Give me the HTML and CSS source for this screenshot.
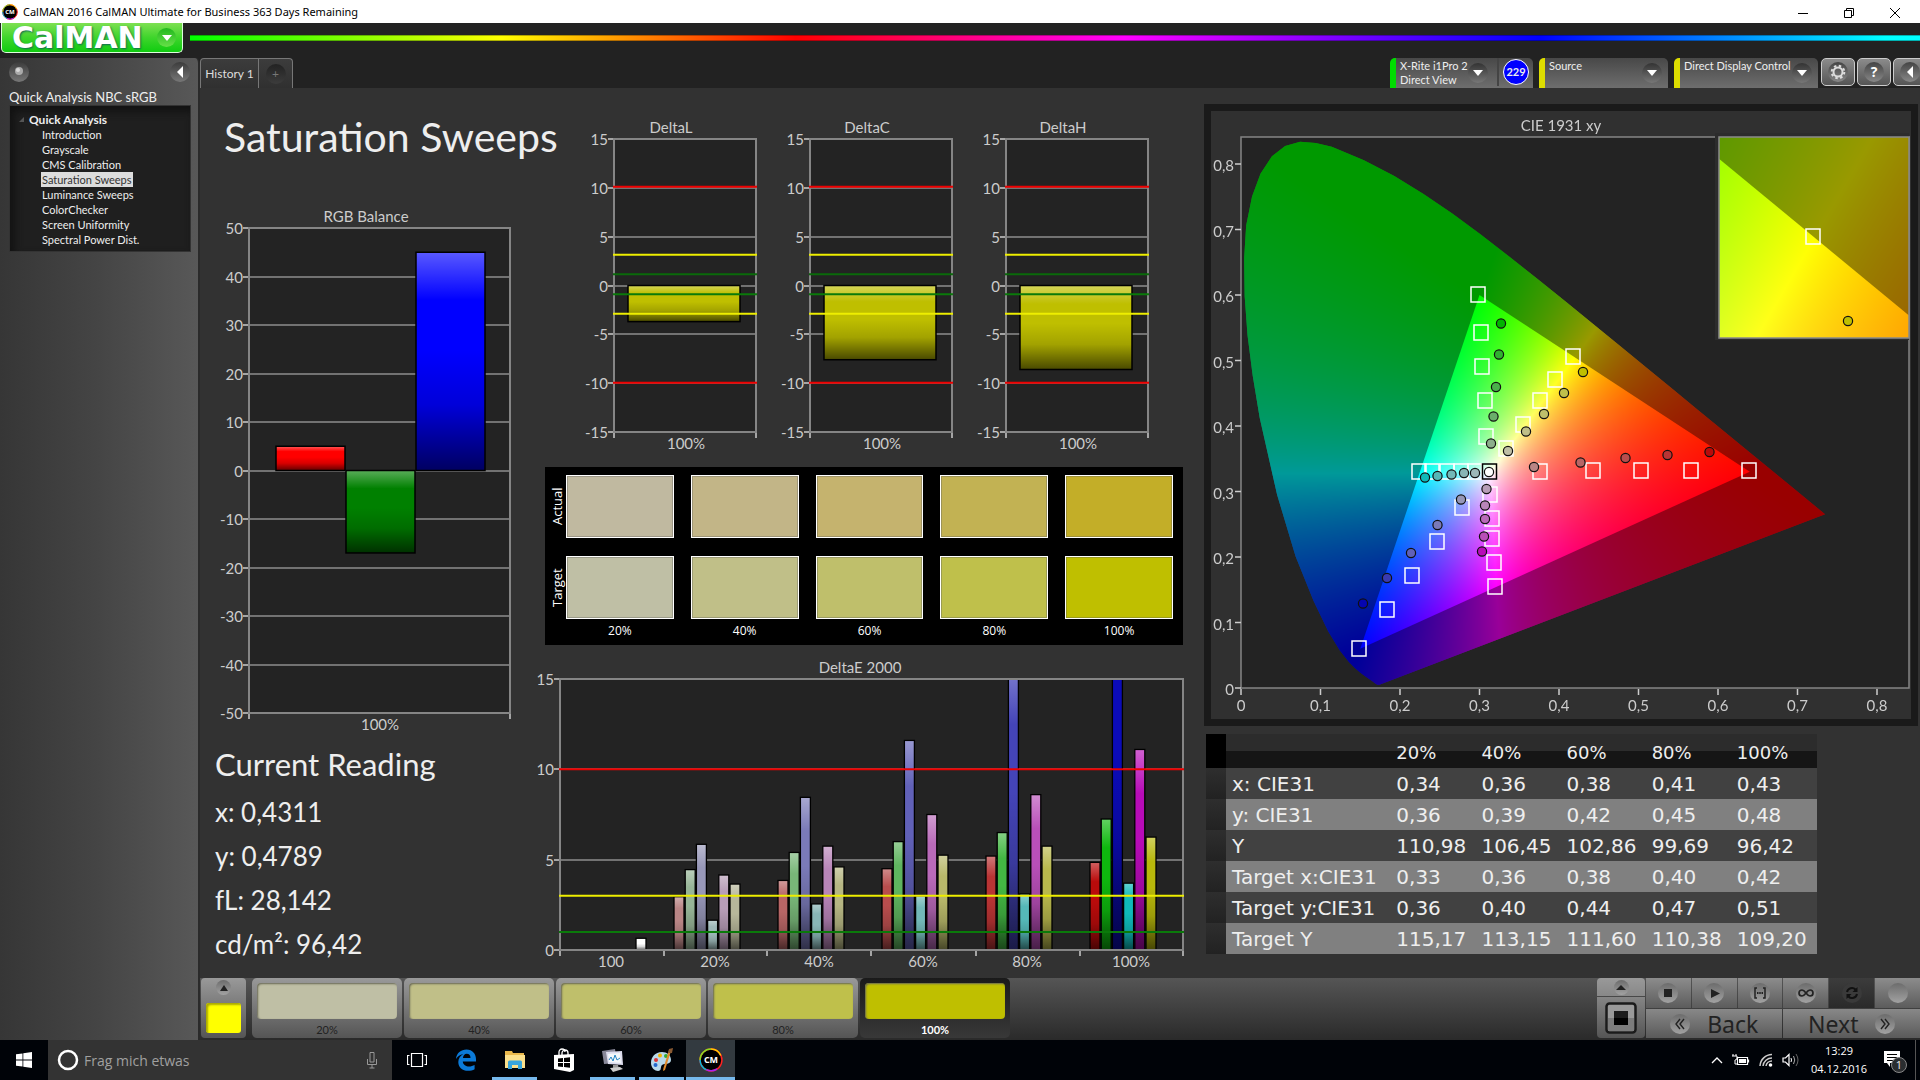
FILE: index.html
```html
<!DOCTYPE html>
<html lang="en">
<head>
<meta charset="utf-8">
<title>CalMAN 2016 CalMAN Ultimate for Business</title>
<link rel="stylesheet" href="styles.css">
</head>
<body>
<div class="titlebar">
  <svg class="app-icon" width="16" height="16" viewBox="0 0 16 16"><use href="#cm"/></svg>
  <span class="titlebar-text">CalMAN 2016 CalMAN Ultimate for Business 363 Days Remaining</span>
  <div class="window-buttons">
    <button aria-label="Minimize"><svg width="12" height="12" viewBox="0 0 12 12"><path d="M1 6.5h10" stroke="#000" fill="none"/></svg></button>
    <button aria-label="Restore"><svg width="12" height="12" viewBox="0 0 12 12"><path d="M1.500 3.500h7v7h-7zM3.500 3.500v-2h7v7h-2" stroke="#000" fill="none"/></svg></button>
    <button aria-label="Close"><svg width="12" height="12" viewBox="0 0 12 12"><path d="M1 1l10 10M11 1L1 11" stroke="#000" fill="none"/></svg></button>
  </div>
</div>

<header class="brandbar">
  <button class="logo"><span class="logo-text">CalMAN</span><span class="logo-arrow"><svg width="10" height="6" viewBox="0 0 10 6"><path d="M0 0h10L5 6z" fill="#fff"/></svg></span></button>
  <div class="spectrum"></div>
</header>

<div class="workspace">
  <aside class="sidebar">
    <div class="sidebar-top">
      <button class="round" aria-label="Options"><svg width="20" height="20" viewBox="0 0 20 20"><circle cx="10" cy="9" r="4" fill="#aaa"/><circle cx="9" cy="8" r="2" fill="#d8d8d8"/></svg></button>
      <button class="round" aria-label="Collapse"><svg width="20" height="20" viewBox="0 0 20 20"><path d="M13 4v12L7 10z" fill="#fff"/></svg></button>
    </div>
    <h2 class="workflow">Quick Analysis NBC sRGB</h2>
    <nav class="tree">
      <div class="tree-root"><svg width="5" height="5" viewBox="0 0 5 5"><path d="M5 0v5H0z" fill="#555"/></svg>Quick Analysis</div>
      <ul>
        <li><a href="#">Introduction</a></li>
        <li><a href="#">Grayscale</a></li>
        <li><a href="#">CMS Calibration</a></li>
        <li><a href="#" class="current">Saturation Sweeps</a></li>
        <li><a href="#">Luminance Sweeps</a></li>
        <li><a href="#">ColorChecker</a></li>
        <li><a href="#">Screen Uniformity</a></li>
        <li><a href="#">Spectral Power Dist.</a></li>
      </ul>
    </nav>
  </aside>

  <div class="content">
    <div class="toolbar">
      <div class="tabs">
        <button class="tab">History 1</button>
        <button class="tab add"><span>+</span></button>
      </div>
      <div class="devices">
        <button class="device meter"><span class="device-name">X-Rite i1Pro 2<br>Direct View</span><span class="drop"><svg width="10" height="6" viewBox="0 0 10 6"><path d="M0 0h10L5 6z" fill="#fff"/></svg></span><span class="count"><b>229</b></span></button>
        <button class="device source"><span class="device-name">Source</span><span class="drop"><svg width="10" height="6" viewBox="0 0 10 6"><path d="M0 0h10L5 6z" fill="#fff"/></svg></span></button>
        <button class="device display"><span class="device-name">Direct Display Control</span><span class="drop"><svg width="10" height="6" viewBox="0 0 10 6"><path d="M0 0h10L5 6z" fill="#fff"/></svg></span></button>
        <div class="tools">
          <button class="tool" aria-label="Settings"><span class="disc"><svg width="16" height="16" viewBox="0 0 16 16"><circle cx="8" cy="8" r="4.500" fill="none" stroke="#ddd" stroke-width="2"/><circle cx="8" cy="8" r="6.300" fill="none" stroke="#ddd" stroke-width="2" stroke-dasharray="2.500 2.450"/></svg></span></button>
          <button class="tool" aria-label="Help"><span class="disc">?</span></button>
          <button class="tool" aria-label="Hide"><span class="disc"><svg width="6" height="12" viewBox="0 0 6 12"><path d="M6 0v12L0 6z" fill="#fff"/></svg></span></button>
        </div>
      </div>
    </div>

    <main class="board">
      <section class="col-left">
        <h1>Saturation Sweeps</h1>
        <svg id="rgb" class="chart" viewBox="0 0 300 530" role="img" aria-label="RGB Balance"></svg>
        <div class="reading">
          <h2>Current Reading</h2>
          <p>x: 0,4311</p>
          <p>y: 0,4789</p>
          <p>fL: 28,142</p>
          <p>cd/m²: 96,42</p>
        </div>
      </section>

      <section class="col-mid">
        <div class="deltas">
          <svg id="deltaL" class="chart" viewBox="0 0 196 340" role="img" aria-label="DeltaL"></svg>
          <svg id="deltaC" class="chart" viewBox="0 0 196 340" role="img" aria-label="DeltaC"></svg>
          <svg id="deltaH" class="chart" viewBox="0 0 196 340" role="img" aria-label="DeltaH"></svg>
        </div>
        <div class="swatches">
          <span class="vlabel">Actual</span>
          <i class="a20"></i><i class="a40"></i><i class="a60"></i><i class="a80"></i><i class="a100"></i>
          <span class="vlabel">Target</span>
          <i class="t20"></i><i class="t40"></i><i class="t60"></i><i class="t80"></i><i class="t100"></i>
          <span></span><span>20%</span><span>40%</span><span>60%</span><span>80%</span><span>100%</span>
        </div>
        <svg id="deltaE" class="chart" viewBox="0 0 660 320" role="img" aria-label="DeltaE 2000"></svg>
      </section>

      <section class="col-right">
        <div class="cie-panel">
          <svg id="cie" class="chart" viewBox="0 0 700 608" role="img" aria-label="CIE 1931 xy">
            <foreignObject x="30" y="26" width="668" height="551"><canvas id="gamut" width="668" height="551"></canvas></foreignObject>
            <g id="cie-marks"></g>
            <rect x="504" y="22" width="194" height="207" fill="#2c2c2c"/>
            <foreignObject x="508" y="26" width="190" height="201"><canvas id="inset" width="190" height="201"></canvas></foreignObject>
            <g id="inset-marks"></g>
          </svg>
        </div>
        <table class="results">
          <thead><tr><th class="stub"></th><th></th><th>20%</th><th>40%</th><th>60%</th><th>80%</th><th>100%</th></tr></thead>
          <tbody>
            <tr><td class="stub"></td><th>x: CIE31</th><td>0,34</td><td>0,36</td><td>0,38</td><td>0,41</td><td>0,43</td></tr>
            <tr><td class="stub"></td><th>y: CIE31</th><td>0,36</td><td>0,39</td><td>0,42</td><td>0,45</td><td>0,48</td></tr>
            <tr><td class="stub"></td><th>Y</th><td>110,98</td><td>106,45</td><td>102,86</td><td>99,69</td><td>96,42</td></tr>
            <tr><td class="stub"></td><th>Target x:CIE31</th><td>0,33</td><td>0,36</td><td>0,38</td><td>0,40</td><td>0,42</td></tr>
            <tr><td class="stub"></td><th>Target y:CIE31</th><td>0,36</td><td>0,40</td><td>0,44</td><td>0,47</td><td>0,51</td></tr>
            <tr><td class="stub"></td><th>Target Y</th><td>115,17</td><td>113,15</td><td>111,60</td><td>110,38</td><td>109,20</td></tr>
          </tbody>
        </table>
      </section>
    </main>

    <footer class="controls">
      <button class="pattern-current" aria-label="Current color"><span class="disc small"><svg width="8" height="6" viewBox="0 0 8 6"><path d="M0 6h8L4 0z" fill="#222"/></svg></span><i></i></button>
      <div class="patterns">
        <button class="pattern"><i class="t20"></i>20%</button>
        <button class="pattern"><i class="t40"></i>40%</button>
        <button class="pattern"><i class="t60"></i>60%</button>
        <button class="pattern"><i class="t80"></i>80%</button>
        <button class="pattern active"><i class="t100"></i>100%</button>
      </div>
      <div class="window-mode">
        <button class="mode-up" aria-label="More"><span class="disc small"><svg width="10" height="5" viewBox="0 0 10 5"><path d="M0 5h10L5 0z" fill="#222"/></svg></span></button>
        <button class="mode" aria-label="Pattern window"><svg width="32" height="32" viewBox="0 0 32 32"><rect x="1.500" y="1.500" width="29" height="29" rx="3" fill="#9a9a9a" stroke="#1b1b1b" stroke-width="2.500"/><path d="M3 16h26v13H3z" fill="#7c7c7c"/><rect x="9" y="9" width="14" height="14"/><rect x="9" y="9" width="14" height="7" fill="#1c1c1c"/></svg></button>
      </div>
      <div class="transport">
        <button aria-label="Stop"><span class="disc"><svg width="20" height="20" viewBox="0 0 20 20"><path d="M6 6h8v8H6z" fill="#222"/></svg></span></button>
        <button aria-label="Play"><span class="disc"><svg width="20" height="20" viewBox="0 0 20 20"><path d="M7 6v9l9-4.500z" fill="#222"/></svg></span></button>
        <button aria-label="Read series"><span class="disc"><svg width="20" height="20" viewBox="0 0 20 20"><path d="M7 5H5v10h2M13 5h2v10h-2" fill="none" stroke="#222" stroke-width="1.500"/><path d="M7 10h6" stroke="#222" stroke-width="2" stroke-dasharray="1.500 .750"/></svg></span></button>
        <button aria-label="Continuous"><span class="disc"><svg width="20" height="20" viewBox="0 0 20 20"><path d="M10 10c-1.500-2-2.500-3-4-3a3 3 0 0 0 0 6c1.500 0 2.500-1 4-3s2.500-3 4-3a3 3 0 0 1 0 6c-1.500 0-2.500-1-4-3z" fill="none" stroke="#222" stroke-width="1.700"/></svg></span></button>
        <button class="pressed" aria-label="Repeat"><span class="disc"><svg width="20" height="20" viewBox="0 0 20 20"><path d="M5 9a5 5 0 0 1 8.500-2.500M15 11a5 5 0 0 1-8.500 2.500" fill="none" stroke="#111" stroke-width="2"/><path d="M15.500 4v5h-5zM4.500 16v-5h5z" fill="#111"/></svg></span></button>
        <button aria-label="Record"><span class="disc"></span></button>
        <button class="wide"><span class="disc"><svg width="20" height="20" viewBox="0 0 20 20"><path d="M10 5l-4 5 4 5M14 5l-4 5 4 5" fill="none" stroke="#222" stroke-width="1.400"/></svg></span>Back</button>
        <button class="wide next">Next<span class="disc"><svg width="20" height="20" viewBox="0 0 20 20"><path d="M6 5l4 5-4 5M10 5l4 5-4 5" fill="none" stroke="#222" stroke-width="1.400"/></svg></span></button>
      </div>
    </footer>
  </div>
</div>

<div class="taskbar">
  <button class="task start" aria-label="Start"><svg width="16" height="16" viewBox="0 0 16 16"><path d="M0 2.300L6.500 1.400V7.600H0zM7.300 1.300L16 0v7.600H7.300zM0 8.400h6.500v6.200L0 13.700zM7.300 8.400H16V16l-8.700-1.300z" fill="#fff"/></svg></button>
  <label class="search">
    <svg width="22" height="22" viewBox="0 0 22 22"><circle cx="11" cy="11" r="9" fill="none" stroke="#fff" stroke-width="2.500"/></svg>
    <input type="text" placeholder="Frag mich etwas" aria-label="Search">
    <svg width="12" height="18" viewBox="0 0 12 18"><path d="M4 1.500h4V11H4zM1.500 8v5.500h9V8M6 13.500V17M3.500 17h5" fill="none" stroke="#999"/></svg>
  </label>
  <button class="task" aria-label="Task view"><svg width="20" height="16" viewBox="0 0 20 16"><path d="M4.500 1.500h11v13h-11zM2.500 3.500h-2v9h2M17.500 3.500h2v9h-2" fill="none" stroke="#fff" stroke-width="1.200"/></svg></button>
  <button class="task" aria-label="Edge"><svg width="22" height="22" viewBox="0 0 22 22"><path d="M1 10C1.500 4 6 .500 11.500.500 17.500.500 21 5 21 10v2.500H7.800c.2 3.500 3.300 5 6.200 5 2 0 4-.6 5.600-1.500v4.200C17.800 21.300 15.500 21.800 13 21.800 7.500 21.800 3.300 18.500 3.300 13c0-3.500 2-6.500 5-8C5 5.500 2.500 7.500 1 10zM8 9h7.500c0-3-1.500-4.300-3.700-4.300C9.500 4.700 8.200 6.500 8 9z" fill="#0b7ad8"/></svg></button>
  <button class="task open" aria-label="Explorer"><svg width="22" height="20" viewBox="0 0 22 20"><path d="M1 1h7l1 2h11v15H1z" fill="#e9b84c"/><path d="M1 5h20v13H1z" fill="#fbe08c"/><path d="M4 19v-7q0-1.500 1.500-1.500h11q1.500 0 1.500 1.500v7h-4v-4H8v4z" fill="#38a5dc"/></svg></button>
  <button class="task" aria-label="Store"><svg width="22" height="24" viewBox="0 0 22 24"><path d="M6 8V4a3 3 0 0 1 6 0M9 8V5a3 3 0 0 1 6 0v2" fill="none" stroke="#fff" stroke-width="1.300"/><path d="M1 7l20-1v16l-4 2L1 21z" fill="#fff"/><path d="M5 10.500l5-.5v4H5zM11 9.900l6-.6V14h-6zM5 15h5v4l-5-.5zM11 15h6v4.700l-6-.6z" fill="#000"/></svg></button>
  <button class="task open" aria-label="Display calibration"><svg width="24" height="24" viewBox="0 0 24 24"><path d="M1 3l13-2 2 14-13 1z" fill="#889"/><path d="M5 4l16-1 1 14-15-1z" fill="#dde"/><path d="M7 6l12-1 1 10-12-1z" fill="#f4f8fb"/><path d="M8 12l2-3 2 4 2-6 2 5 3-2" fill="none" stroke="#2384c4"/><path d="M12 17h5l1 4h-6z" fill="#999"/><path d="M9 20l10-1 3 2-10 3z" fill="#ccc"/></svg></button>
  <button class="task open" aria-label="Paint"><svg width="24" height="24" viewBox="0 0 24 24"><path d="M12 4C5 4 1 9 1 15c0 5 4 8 7 8 4 0 2-4 4-6s9 0 9-5-4-8-9-8z" fill="#b7d8ea"/><circle cx="6" cy="12" r="2" fill="#d33"/><circle cx="10" cy="7.500" r="2" fill="#f5b400"/><circle cx="16" cy="8" r="2" fill="#3a3"/><circle cx="5.500" cy="17" r="2" fill="#26c"/><path d="M21 3l-6 19-2 1 .5-3L19 2z" fill="#e08a2a"/><path d="M18 5l1-4 4-1-1 5z" fill="#8a5a33"/></svg></button>
  <button class="task open focused" aria-label="CalMAN"><svg width="24" height="24" viewBox="0 0 16 16"><use href="#cm"/></svg></button>
  <div class="tray">
    <svg width="12" height="8" viewBox="0 0 12 8"><path d="M1 7l5-5 5 5" fill="none" stroke="#fff" stroke-width="1.300"/></svg>
    <svg width="18" height="12" viewBox="0 0 18 12"><path d="M5.500 3.500h10v7h-10zM16.500 5.500v3" fill="none" stroke="#fff" stroke-width="1.200"/><path d="M7 5h7v4H7z" fill="#fff"/><path d="M1 0v2M4 0v2M0 2h5v2a2 2 0 0 1-2 2v4h2" fill="none" stroke="#fff"/></svg>
    <svg width="14" height="14" viewBox="0 0 14 14"><path d="M1 13A12 12 0 0 1 13 1.500M4 13A9 9 0 0 1 13 5M7 13a6 6 0 0 1 6-5" fill="none" stroke="#ccc" stroke-width="1.500"/><circle cx="11.500" cy="12" r="1.800" fill="#fff"/></svg>
    <svg width="18" height="14" viewBox="0 0 18 14"><path d="M1 5h2.500L7 1.500v11L3.500 9H1z" fill="none" stroke="#fff" stroke-width="1.200"/><path d="M9 5q1 2 0 4" fill="none" stroke="#fff"/><path d="M11.500 3q2.500 4 0 8" fill="none" stroke="#aaa"/><path d="M14 1q4 6 0 12" fill="none" stroke="#666"/></svg>
    <div class="clock">13:29<br>04.12.2016</div>
    <div class="notice"><svg width="17" height="17" viewBox="0 0 17 17"><path d="M0 0h16v12H6v4l-3-4H0z" fill="#fff"/><path d="M3 3.500h10M3 6.500h10M3 9.500h6" stroke="#000"/></svg><span class="badge">1</span></div>
    <span class="peek"></span>
  </div>
</div>

<svg class="defs" width="0" height="0">
  <defs>
    <linearGradient id="shade" x1="0" y1="0" x2="0" y2="1">
      <stop offset="0" stop-color="#fff" stop-opacity=".35"/><stop offset=".22" stop-color="#fff" stop-opacity="0"/>
      <stop offset=".45" stop-color="#000" stop-opacity="0"/><stop offset=".7" stop-color="#000" stop-opacity=".15"/>
      <stop offset="1" stop-color="#000" stop-opacity=".62"/>
    </linearGradient>
    <symbol id="cm" viewBox="0 0 16 16">
      <circle cx="8" cy="8" r="7.300" fill="#000" stroke="#f22" stroke-width="1"/>
      <path d="M.7 8A7.300 7.300 0 0 1 8 .7" fill="none" stroke="#8d2" stroke-width="1"/>
      <path d="M8 .7A7.300 7.300 0 0 1 14.500 5" fill="none" stroke="#fc0" stroke-width="1"/>
      <path d="M.7 8A7.300 7.300 0 0 0 5 14.500" fill="none" stroke="#0bd" stroke-width="1"/>
      <path d="M5 14.500A7.300 7.300 0 0 0 12 14" fill="none" stroke="#a2e" stroke-width="1"/>
      <text x="8" y="10.300" text-anchor="middle" class="cm-text">CM</text>
    </symbol>
  </defs>
</svg>
<script src="charts.js"></script>
</body>
</html>
```
FILE: styles.css
```css
* { box-sizing: border-box; }
body {
  margin: 0;
  min-height: 100vh;
  display: flex;
  flex-direction: column;
  overflow: hidden;
  background: #222;
  color: #eee;
  font: 12px/15px Lato, "Noto Sans", sans-serif;
}
button { border: 0; padding: 0; background: none; color: inherit; font: inherit; }
h1, h2, p, ul { margin: 0; padding: 0; font-weight: 400; }
a { color: inherit; text-decoration: none; }
.defs { position: absolute; }
.cm-text { font: 700 6px "Open Sans", sans-serif; fill: #fff; }

.titlebar { display: flex; align-items: center; height: 23px; padding-left: 2px; background: #fff; color: #000; line-height: 22px; }
.app-icon { margin-right: 5px; }
.titlebar-text { font-family: "Noto Sans", sans-serif; font-size: 11px; }
.window-buttons { display: flex; margin-left: auto; padding-right: 2px; }
.window-buttons button { width: 46px; height: 20px; }
.window-buttons svg { vertical-align: middle; }

.brandbar { display: flex; height: 35px; }
.logo {
  display: flex; align-items: center; justify-content: space-between;
  width: 182px; height: 30px; margin: 0 7px 0 1px; padding: 0 6px 0 10px;
  border: 1px solid #dfd; border-top: 0; border-radius: 0 0 5px 5px;
  background: linear-gradient(#7ee052, #3fd52c 50%, #10cc10);
}
.logo-text { font: 700 30px/29px "DejaVu Sans", sans-serif; color: #fff; text-shadow: 1px 1px 2px #165; }
.logo-arrow { display: grid; place-items: center; width: 19px; height: 19px; border-radius: 50%; background: linear-gradient(#22b81e, #66e048); }
.spectrum { flex: 1; height: 6px; margin-top: 12px; border-block: 1px solid rgba(0,0,0,.3); background: linear-gradient(90deg, #0f0, #ff0 18%, #f00 35%, #f0f 54%, #00f 78%, #0ff 98%); }

.workspace { flex: 1; display: flex; }
.sidebar { width: 200px; flex: none; padding: 4px 8px 0 9px; border-right: 2px solid #2a2a2a; border-radius: 0 5px 0 0; background: linear-gradient(90deg, #363636, #454545 50%, #585858); }
.sidebar-top { display: flex; justify-content: space-between; height: 29px; }
.round { width: 20px; height: 20px; border-radius: 50%; background: linear-gradient(#3c3c3c, #777); }
.workflow { font-size: 13px; line-height: 13px; }
.tree { width: 182px; height: 147px; margin-top: 1px; padding: 6px 0 0 9px; border: 1px solid #333; background: #1f1f1f; box-shadow: inset 4px 5px 8px #111; }
.tree-root { display: flex; align-items: center; gap: 5px; font-weight: 700; }
.tree ul { display: grid; grid-auto-rows: 1fr; height: 116px; list-style: none; padding-left: 23px; }
.tree li { line-height: 15px; font-size: 11px; }
.current { display: inline-block; padding: 0 1px; margin-left: -1px; background: #ddd; color: #333; }

.content { flex: 1; min-width: 0; display: flex; flex-direction: column; }
.toolbar { display: flex; justify-content: space-between; height: 30px; }
.tabs { display: flex; }
.tab { width: 59px; border: 1px solid #777; border-bottom: 0; border-radius: 4px 0 0 0; background: linear-gradient(#3c3c3c, #303030); color: #ddd; font-size: 12px; }
.tab.add { width: 34px; border-left: 0; border-radius: 0 4px 0 0; color: #777; }
.tab.add span { display: inline-block; width: 20px; line-height: 20px; border-radius: 50%; background: linear-gradient(#222, #3c3c3c); }
.devices { display: flex; gap: 6px; overflow: hidden; }
.device { display: flex; padding-left: 4px; border-left: 6px solid #cc0; border-radius: 5px 5px 0 0; background: linear-gradient(#484848, #6e6e6e); text-align: left; line-height: 14px; }
.device-name { flex: 1; width: 0; padding-top: 1px; white-space: nowrap; font-size: 11px; }
.drop { flex: none; display: grid; place-items: center; width: 20px; height: 20px; margin: 5px 6px; border-radius: 50%; background: linear-gradient(#333, #777); }
.meter { width: 143px; border-color: #0d0; }
.meter .drop { margin: 5px 9px 0 0; }
.source { width: 129px; border-color: #dd0; }
.display { width: 144px; border-color: #dd0; }
.count { flex: none; display: grid; place-items: center; width: 36px; height: 28px; border-left: 2px solid #444; }
.count b { width: 26px; height: 26px; border: 1px solid #fff; border-radius: 50%; background: #00f; text-align: center; line-height: 24px; font-size: 11px; }
.tools { display: flex; gap: 2px; width: 99px; margin-left: -3px; }
.tool { flex: none; width: 34px; height: 28px; border: 1px solid #ccc; border-radius: 5px; background: linear-gradient(#8b8b8b, #555); display: grid; place-items: center; }
.disc { display: grid; place-items: center; width: 20px; height: 20px; border-radius: 50%; background: linear-gradient(#6c6c6c, #a2a2a2); }
.tool .disc { background: linear-gradient(#444, #888); color: #fff; font: 700 14px/20px "Open Sans", sans-serif; }
.disc.small { width: 15px; height: 15px; }

.board { flex: 1; display: grid; grid-template-columns: 330fr 660fr 730fr; background: #323232; }
.board > section { min-width: 0; }
.chart { display: block; width: 100%; height: auto; }
.chart text { font: 15px Lato, sans-serif; fill: #ccc; dominant-baseline: central; }
.col-left { padding: 24px 15px 0; }
h1 { padding-left: 9px; font-size: 41px; line-height: 50px; white-space: nowrap; }
#rgb { margin-top: 43px; }
.reading { font-size: 26px; }
.reading h2 { margin-bottom: -3px; font-size: 31px; line-height: 58px; }
.reading p { line-height: 44px; }
.deltas { display: grid; grid-template-columns: repeat(3, 1fr); padding: 27px 22px 0 50px; }
.swatches {
  display: grid; grid-template-columns: 0 repeat(5, 1fr); grid-template-rows: 63px 63px 16px;
  gap: 18px 17px; margin: 12px 7px 10px 15px; padding: 8px 10px 0 4px; height: 178px;
  background: #000; color: #fff; text-align: center; font: 12px/16px "Open Sans", sans-serif;
}
.swatches i { border: 1px solid #fff; box-shadow: inset 0 0 0 1px rgba(90,90,90,.35); }
.swatches > span:nth-last-child(-n+6) { margin-top: -14px; }
.vlabel { width: 16px; writing-mode: vertical-rl; transform: rotate(180deg); line-height: 16px; font-size: 13px; }
.a20 { background: #c0b9a0; } .a40 { background: #c2b587; } .a60 { background: #c5b36e; } .a80 { background: #c2b253; } .a100 { background: #c3ae28; }
.t20 { background: #bfbfa5; } .t40 { background: #c0bf88; } .t60 { background: #bfbf6b; } .t80 { background: #bfc04b; } .t100 { background: #bfbf00; }
.col-right { padding: 16px 2px 0 14px; }
.cie-panel { border: 7px solid #1a1a1a; background: #303030; }
.results { margin: 8px 0 0 2px; border-collapse: collapse; table-layout: fixed; width: 611px; font: 20px/27px "DejaVu Sans", sans-serif; }
.results th, .results td { height: 31px; padding: 2px 0 0 5px; width: 85px; text-align: left; font-weight: 400; white-space: nowrap; }
.results th:nth-child(2) { width: 165px; padding-left: 6px; }
.results th.stub, .results td.stub { width: 20px; padding: 0; background: linear-gradient(#2e2e2e, #222); }
.results thead th { height: 34px; font-size: 18px; }
.results thead tr { background: linear-gradient(#2c2c2c 50%, #151515 50%); }
.results thead .stub { background: #000; }
.results tbody tr { background: #414141; }
.results tbody tr:nth-child(even) { background: #808080; }

.controls { display: flex; height: 62px; padding: 0 0 2px 1px; background: linear-gradient(#555, #2a2a2a); color: #222; font-size: 11px; }
.pattern-current { width: 45px; display: flex; flex-direction: column; align-items: center; justify-content: space-between; padding: 2px 5px 5px; border-radius: 4px; background: linear-gradient(#999, #555); }
.pattern-current i { width: 35px; height: 30px; border-radius: 3px; background: #ff0; box-shadow: inset 2px 2px 2px #aa0; }
.patterns { display: flex; gap: 2px; margin-left: 6px; }
.pattern { width: 150px; padding: 5px 5px 1px; border-radius: 5px; background: linear-gradient(#999, #555); line-height: 14px; display: flex; flex-direction: column; gap: 4px; text-align: center; }
.pattern i { display: block; width: 100%; height: 36px; border-radius: 4px; box-shadow: inset 1px 1px 2px #665; }
.pattern { align-items: center; }
.pattern.active { background: linear-gradient(#1a1a1a, #383838); color: #fff; font-weight: 700; }
.window-mode { display: grid; grid-template-rows: 18px 1fr; gap: 1px; width: 48px; margin-left: auto; }
.window-mode button { display: grid; place-items: center; background: linear-gradient(#999, #888); border-radius: 4px 4px 0 0; }
.window-mode .mode { background: linear-gradient(#858585, #555); border-radius: 0 0 4px 4px; }
.transport { display: grid; grid-template-columns: repeat(6, 1fr); grid-template-rows: 30px 29px; gap: 1px; width: 274px; margin-left: 1px; }
.transport button { display: flex; align-items: center; justify-content: center; background: linear-gradient(#8c8c8c, #5c5c5c); }
.transport .pressed { background: linear-gradient(#3c3c3c, #2a2a2a); }
.pressed .disc { background: #3a3a3a; }
.transport .wide { grid-column: span 3; gap: 17px; font: 23px/28px "Noto Sans", sans-serif; background: linear-gradient(#888, #5a5a5a); }

.taskbar { display: flex; height: 40px; background: #000308; font-family: "Open Sans", sans-serif; }
.task { display: grid; place-items: center; width: 49px; border-bottom: 3px solid transparent; padding-top: 3px; background-clip: padding-box; }
.start { width: 48px; }
.task.open { border-image: linear-gradient(90deg, transparent 5px, #76b9ed 5px 44px, transparent 44px) 3; }
.task.focused { background: #333a40; border-image: none; border-bottom-color: #76b9ed; }
.search { display: flex; align-items: center; width: 344px; padding: 0 14px 0 9px; background: #333; }
.search input { flex: 1; border: 0; padding: 0 0 0 5px; background: none; font: 14px "Open Sans", sans-serif; }
.search input::placeholder { color: #a0a0a0; opacity: 1; }
.tray { display: flex; align-items: center; gap: 9px; margin-left: auto; height: 40px; }
.clock { text-align: center; line-height: 18px; font-size: 11px; width: 60px; color: #fff; }
.notice { position: relative; margin-left: 6px; width: 24px; height: 24px; padding-top: 3px; }
.badge { position: absolute; left: 7px; top: 9px; width: 16px; height: 16px; border: 1px solid #888; border-radius: 50%; background: #2a2d30; text-align: center; line-height: 14px; font-size: 11px; }
.peek { width: 5px; height: 40px; margin-left: -2px; border-left: 1px solid #555; }
```
FILE: charts.js
```js
const NS = 'http://www.w3.org/2000/svg';

function add(parent, name, attrs, text) {
  const el = document.createElementNS(NS, name);
  for (const key in attrs) el.setAttribute(key, attrs[key]);
  if (text !== undefined) el.textContent = text;
  parent.appendChild(el);
  return el;
}

function line(svg, x1, y1, x2, y2, color, width) {
  add(svg, 'path', { d: `M${x1} ${y1}L${x2} ${y2}`, stroke: color, 'stroke-width': width });
}

/* Bar chart: o = {left, right, top, bottom, min, max, step, bars, limits, labels, ticks} */
function barChart(id, o) {
  const svg = document.getElementById(id);
  const toY = v => o.bottom - (v - o.min) / (o.max - o.min) * (o.bottom - o.top);
  add(svg, 'text', { x: o.titleX, y: o.top - 12, 'text-anchor': 'middle' }, o.title);
  add(svg, 'rect', { x: o.left, y: o.top, width: o.right - o.left, height: o.bottom - o.top, fill: '#232323' });
  for (let v = o.min; v <= o.max; v += o.step) {
    const y = Math.round(toY(v));
    line(svg, o.left, y, o.right, y, '#727272', 2);
    line(svg, o.left - 6, y, o.left, y, '#ccc', 1.5);
    add(svg, 'text', { x: o.left - 6, y, 'text-anchor': 'end' }, v);
  }
  const clip = id + '-clip';
  add(add(svg, 'clipPath', { id: clip }), 'rect', { x: o.left, y: o.top, width: o.right - o.left, height: o.bottom - o.top + 1 });
  const group = add(svg, 'g', { 'clip-path': `url(#${clip})` });
  for (const [x, w, v, color] of o.bars) {
    const base = toY(Math.max(0, o.min));
    const y = Math.min(base, toY(v));
    const h = Math.abs(base - toY(v));
    add(group, 'rect', { x, y, width: w, height: h, fill: color });
    add(group, 'rect', { x, y, width: w, height: h, fill: 'url(#shade)', stroke: '#000', 'stroke-width': o.outline });
  }
  add(svg, 'rect', { x: o.left, y: o.top, width: o.right - o.left, height: o.bottom - o.top, fill: 'none', stroke: '#858585', 'stroke-width': 2 });
  for (const [v, color] of o.limits || []) line(svg, o.left - 1, toY(v), o.right + 1, toY(v), color, 2);
  for (const x of o.ticks) line(svg, x, o.bottom + 1, x, o.bottom + 6, '#ccc', 1.5);
  for (const [x, text] of o.labels) add(svg, 'text', { x, y: o.bottom + 11, 'text-anchor': 'middle' }, text);
}

barChart('rgb', {
  title: 'RGB Balance', titleX: 151, left: 34, right: 295, top: 23, bottom: 508,
  min: -50, max: 50, step: 10, outline: 1.5,
  bars: [[61, 69, 5, '#f00'], [131, 69, -17, '#008000'], [201, 69, 45, '#00f']],
  ticks: [34, 295], labels: [[165, '100%']]
});

const limits = [[10.1, '#e00'], [-9.95, '#e00'], [3.15, '#ee0'], [-2.9, '#ee0'], [1.15, '#0a6a0a'], [-0.9, '#0a7a0a']];
for (const [id, v] of [['deltaL', -3.7], ['deltaC', -7.6], ['deltaH', -8.6]]) {
  barChart(id, {
    title: id[0].toUpperCase() + id.slice(1), titleX: 91, left: 34, right: 176, top: 24, bottom: 317,
    min: -15, max: 15, step: 5, outline: 1.5, limits,
    bars: [[48, 112, v, '#bfbf00']], ticks: [34, 176], labels: [[106, '100%']]
  });
}

const series = [
  [[2.95, '#b98585'], [4.45, '#97b597'], [5.85, '#9797b8'], [1.65, '#9db8b8'], [4.15, '#b79db7'], [3.65, '#b7b79b']],
  [[3.85, '#b86666'], [5.4, '#78b678'], [8.45, '#7a7ab8'], [2.55, '#88b5b5'], [5.75, '#b985b9'], [4.6, '#b6b683']],
  [[4.5, '#b84d4d'], [6, '#5fb55f'], [11.6, '#6161b8'], [3, '#72b8b8'], [7.5, '#b96ab9'], [5.25, '#b8b86a']],
  [[5.2, '#b93434'], [6.5, '#43b743'], [16, '#4444b8'], [3.1, '#55b8b8'], [8.6, '#b94fb9'], [5.75, '#b8b84d']],
  [[4.85, '#b90b0b'], [7.25, '#0eb80e'], [20, '#0b0bb9'], [3.7, '#0fb9b9'], [11.1, '#b80bb8'], [6.25, '#b8b80b']]
];
const bars = [[106, 10, 0.65, '#fff']];
series.forEach((set, g) => set.forEach(([v, c], i) => bars.push([30 + 104 * (g + 1) + 10 + i * 11.2, 10, v, c])));
barChart('deltaE', {
  title: 'DeltaE 2000', titleX: 330, left: 30, right: 653, top: 24, bottom: 295,
  min: 0, max: 15, step: 5, outline: 1.3, bars,
  limits: [[10, '#e00'], [3, '#ee0'], [1, '#0a7a0a']],
  ticks: [30, 134, 237, 341, 446, 550, 653],
  labels: ['100', '20%', '40%', '60%', '80%', '100%'].map((t, i) => [81 + i * 104, t])
});

/* CIE 1931 chromaticity */
const locus = [.1741,.005,.1714,.0051,.1689,.0069,.1644,.0109,.1566,.0177,.151,.0227,.144,.0297,.1355,.0399,.1241,.0578,.1096,.0868,.0913,.1327,.0687,.2007,.0454,.295,.0235,.4127,.0147,.477,.0082,.5384,.0046,.598,.0039,.6548,.0065,.706,.0139,.7502,.0245,.785,.0389,.812,.0555,.8275,.0743,.8338,.094,.832,.1142,.8262,.1547,.8059,.1929,.7816,.2296,.7543,.2658,.7243,.3016,.6923,.3373,.6589,.3731,.6245,.4087,.5896,.4441,.5547,.4788,.5202,.5125,.4866,.5448,.4544,.5752,.4242,.6029,.3965,.627,.3725,.6658,.334,.6915,.3083,.719,.2809,.7347,.2653];
const gamut = [.64, .33, .3, .6, .15, .06];

function paintGamut(id, x0, y0, sx, sy) {
  const canvas = document.getElementById(id);
  const { width: w, height: h } = canvas;
  const ctx = canvas.getContext('2d');
  const off = document.createElement('canvas');
  off.width = w; off.height = h;
  const octx = off.getContext('2d');
  const image = octx.createImageData(w, h);
  for (let j = 0; j < h; j++) for (let i = 0; i < w; i++) {
    const x = x0 + i / sx, y = y0 + (h - j) / sy, z = 1 - x - y;
    const rgb = [3.2406 * x - 1.5372 * y - .4986 * z, -.9689 * x + 1.8758 * y + .0415 * z, .0557 * x - .204 * y + 1.057 * z].map(c => Math.max(0, c));
    const max = Math.max(...rgb);
    const k = (j * w + i) * 4;
    for (let c = 0; c < 3; c++) image.data[k + c] = rgb[c] / max * 255;
    image.data[k + 3] = 255;
  }
  octx.putImageData(image, 0, 0);
  const clipTo = pts => {
    ctx.beginPath();
    for (let n = 0; n < pts.length; n += 2) ctx.lineTo((pts[n] - x0) * sx, h - (pts[n + 1] - y0) * sy);
    ctx.closePath();
    ctx.clip();
  };
  ctx.fillStyle = '#232323';
  ctx.fillRect(0, 0, w, h);
  ctx.save();
  clipTo(locus);
  ctx.drawImage(off, 0, 0);
  ctx.fillStyle = 'rgba(0,0,0,.4)';
  ctx.fillRect(0, 0, w, h);
  ctx.restore();
  ctx.save();
  clipTo(gamut);
  ctx.drawImage(off, 0, 0);
  ctx.restore();
}
paintGamut('gamut', 0, 0, 795, 655);
paintGamut('inset', .4193 - 95 / 3000, .5053 - 101 / 3120, 3000, 3120);

const marks = document.getElementById('cie-marks');
const inset = document.getElementById('inset-marks');
function target(g, x, y, color = '#fff') {
  add(g, 'rect', { x: x - 7, y: y - 7, width: 14, height: 15, fill: 'none', stroke: color, 'stroke-width': 1.5 });
}
function measured(g, x, y, fill) {
  add(g, 'circle', { cx: x, cy: y, r: 4.6, fill, stroke: '#111', 'stroke-width': 1.2 });
}
add(marks, 'text', { x: 350, y: 14, 'text-anchor': 'middle' }, 'CIE 1931 xy');
add(marks, 'rect', { x: 30, y: 26, width: 668, height: 551, fill: 'none', stroke: '#858585', 'stroke-width': 1.5 });
for (let i = 0; i <= 8; i++) {
  const label = i ? '0,' + i : '0';
  const x = 30 + i * 79.5, y = 577 - i * 65.5;
  line(marks, x, 578, x, 584, '#ccc', 1.5);
  line(marks, 24, y, 30, y, '#ccc', 1.5);
  add(marks, 'text', { x, y: 594, 'text-anchor': 'middle' }, label);
  add(marks, 'text', { x: 23, y: y + 1, 'text-anchor': 'end' }, label);
}
const targets = [[267,183],[270,221],[271,255],[274,289],[275,325],[362,245],[344,268],[329,289],[312,313],[295,337],[538,359],[480,359],[430,359],[382,359],[329,360],[208,360],[221,360],[236,360],[250,360],[264,360],[279,383],[281,407],[281,427],[283,451],[284,475],[251,396],[226,430],[201,464],[176,498],[148,537]];
targets.forEach(([x, y]) => target(marks, x, y));
target(marks, 278.500, 360, '#000');
const readings = [[290,212.500,'#00b400'],[288,243.500,'#30b030'],[285,276,'#4ab04a'],[282.500,305.500,'#6aae6a'],[280,332.500,'#8cae8c'],
  [372,261,'#bfbf00'],[353,282,'#bfc04b'],[333,303,'#bfbf6b'],[315,320.500,'#c0bf88'],[297,340,'#bfbfa5'],
  [498.500,341,'#b90b0b'],[456.500,344,'#b93434'],[414.500,347,'#b84d4d'],[369.500,351.500,'#b86666'],[323,356,'#b98585'],
  [214,366.500,'#0fb9b9'],[226.500,365,'#55b8b8'],[240.500,363.500,'#72b8b8'],[253,362,'#88b5b5'],[264,362,'#9db8b8'],
  [275.500,378,'#b79db7'],[274,394.500,'#b985b9'],[274,408,'#b96ab9'],[273,425.500,'#b94fb9'],[271,440.500,'#b80bb8'],
  [250,388.500,'#9797b8'],[226.500,414,'#7a7ab8'],[200,442,'#6161b8'],[176,467,'#3a3ab0'],[152,492.500,'#0505b0'],[278,361,'#fff']];
readings.forEach(([x, y, c]) => measured(marks, x, y, c));
add(inset, 'rect', { x: 508, y: 26, width: 190, height: 201, fill: 'none', stroke: '#8a8a8a', 'stroke-width': 1.5 });
target(inset, 602, 125);
measured(inset, 637, 210, '#bfbf00');
```
